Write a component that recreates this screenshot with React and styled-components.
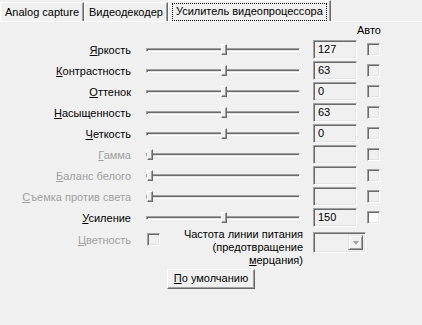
import React from "react";
import styled, { createGlobalStyle } from "styled-components";

const GlobalStyle = createGlobalStyle`
body {
margin: 0;
background: #f0f0f0;
font-family: "Liberation Sans", Arial, sans-serif;
font-size: 11px;
color: #000;
}
`;

const rows = [
  { key: "Я", rest: "ркость", value: "127", pos: 0.5 },
  { key: "К", rest: "онтрастность", value: "63", pos: 0.5 },
  { key: "О", rest: "ттенок", value: "0", pos: 0.5 },
  { key: "Н", rest: "асыщенность", value: "63", pos: 0.5 },
  { key: "Ч", rest: "еткость", value: "0", pos: 0.5 },
  { key: "Г", rest: "амма", value: "", pos: 0, disabled: true },
  { key: "Б", rest: "аланс белого", value: "", pos: 0, disabled: true },
  { key: "С", rest: "ъемка против света", value: "", pos: 0, disabled: true },
  { key: "У", rest: "силение", value: "150", pos: 0.5, enabledCheck: true },
];

export default function App() {
  return (
    <Page>
      <GlobalStyle />
      <TabBar>
        <Tab>Analog capture</Tab>
        <Tab>Видеодекодер</Tab>
        <Tab $active>
          <Focus>Усилитель видеопроцессора</Focus>
        </Tab>
      </TabBar>

      <Panel>
        <AutoHeader>Авто</AutoHeader>
        {rows.map((r) => (
          <Row key={r.rest}>
            <Label $disabled={r.disabled}>
              <u>{r.key}</u>
              {r.rest}
            </Label>
            <Track>
              <Groove />
              <Thumb $pos={r.pos} />
            </Track>
            <Edit>{r.value}</Edit>
            <Check $white={r.enabledCheck} />
          </Row>
        ))}

        <BottomRow>
          <ColorGroup>
            <Label $disabled>
              <u>Ц</u>ветность
            </Label>
            <Check $small />
          </ColorGroup>
          <FreqText>
            Частота линии питания
            <br />
            (предотвращение
            <br />
            <u>м</u>ерцания)
          </FreqText>
          <Combo>
            <ComboButton>
              <Arrow />
            </ComboButton>
          </Combo>
        </BottomRow>

        <DefaultButton>
          <u>П</u>о умолчанию
        </DefaultButton>
      </Panel>
    </Page>
  );
}

const Page = styled.div`
width: 422px;
height: 325px;
background: #f0f0f0;
overflow: hidden;
`;

const TabBar = styled.div`
display: flex;
align-items: flex-end;
height: 21px;
`;

const Tab = styled.div`
box-sizing: border-box;
height: ${(p) => (p.$active ? "21px" : "19px")};
padding: ${(p) => (p.$active ? "2px 3px 0 3px" : "3px 4px 0 4px")};
margin: ${(p) => (p.$active ? "0 -1px 0 0" : "0")};
border-left: 1px solid #fff;
border-top: 1px solid #fff;
border-right: 1px solid #696969;
box-shadow: inset -1px 0 #a0a0a0;
white-space: nowrap;
line-height: 13px;
position: relative;
z-index: ${(p) => (p.$active ? 1 : 0)};
background: #f0f0f0;
`;

const Focus = styled.span`
display: inline-block;
border: 1px dotted #000;
padding: 1px 3px 2px 3px;
line-height: 13px;
`;

const Panel = styled.div`
display: flex;
flex-direction: column;
border-top: 1px solid #fff;
`;

const AutoHeader = styled.div`
height: 17px;
padding: 2px 0 0 357px;
line-height: 13px;
box-sizing: border-box;
`;

const Row = styled.div`
display: flex;
align-items: center;
height: 21px;
`;

const Label = styled.div`
width: 131px;
text-align: right;
white-space: nowrap;
color: ${(p) => (p.$disabled ? "#a0a0a0" : "#000")};
`;

const Track = styled.div`
position: relative;
width: 154px;
height: 11px;
margin-left: 15px;
display: flex;
align-items: center;
`;

const Groove = styled.div`
width: 100%;
height: 4px;
box-sizing: border-box;
border-top: 1px solid #a0a0a0;
border-left: 1px solid #a0a0a0;
border-bottom: 1px solid #fff;
border-right: 1px solid #fff;
box-shadow: inset 1px 1px #696969, inset -1px -1px #e3e3e3;
`;

const Thumb = styled.div`
position: absolute;
top: 0;
left: ${(p) => 1 + p.$pos * 148}px;
width: 6px;
height: 11px;
box-sizing: border-box;
background: #f0f0f0;
border-top: 1px solid #fff;
border-left: 1px solid #fff;
border-right: 1px solid #696969;
border-bottom: 1px solid #696969;
box-shadow: inset -1px -1px #a0a0a0;
`;

const Edit = styled.div`
box-sizing: border-box;
width: 44px;
height: 19px;
margin-left: 13px;
padding: 2px 0 0 4px;
line-height: 13px;
border-top: 1px solid #a0a0a0;
border-left: 1px solid #a0a0a0;
border-bottom: 1px solid #fff;
border-right: 1px solid #fff;
box-shadow: inset 1px 1px #696969, inset -1px -1px #e3e3e3;
background: #f0f0f0;
`;

const Check = styled.div`
box-sizing: border-box;
width: 13px;
height: 13px;
margin-left: ${(p) => (p.$small ? "16px" : "10px")};
border-top: 1px solid #a0a0a0;
border-left: 1px solid #a0a0a0;
border-bottom: 1px solid #fff;
border-right: 1px solid #fff;
box-shadow: inset 1px 1px #696969, inset -1px -1px #e3e3e3;
background: ${(p) => (p.$white ? "#fff" : "#f0f0f0")};
`;

const BottomRow = styled.div`
display: flex;
align-items: flex-start;
height: 39px;
`;

const ColorGroup = styled.div`
display: flex;
align-items: center;
margin-top: 5px;
`;

const FreqText = styled.div`
width: 143px;
text-align: right;
line-height: 13px;
white-space: nowrap;
`;

const Combo = styled.div`
box-sizing: border-box;
width: 53px;
height: 21px;
margin: 4px 0 0 10px;
padding: 2px;
display: flex;
justify-content: flex-end;
border-top: 1px solid #a0a0a0;
border-left: 1px solid #a0a0a0;
border-bottom: 1px solid #fff;
border-right: 1px solid #fff;
box-shadow: inset 1px 1px #696969, inset -1px -1px #e3e3e3;
background: #f0f0f0;
`;

const ComboButton = styled.div`
box-sizing: border-box;
width: 15px;
height: 15px;
display: flex;
align-items: center;
justify-content: center;
border-top: 1px solid #e3e3e3;
border-left: 1px solid #e3e3e3;
border-bottom: 1px solid #696969;
border-right: 1px solid #696969;
box-shadow: inset 1px 1px #fff, inset -1px -1px #a0a0a0;
`;

const Arrow = styled.div`
width: 0;
height: 0;
border-left: 3.5px solid transparent;
border-right: 3.5px solid transparent;
border-top: 4px solid #a0a0a0;
filter: drop-shadow(1px 1px 0 #fff);
`;

const DefaultButton = styled.div`
box-sizing: border-box;
width: 88px;
height: 20px;
margin: 2px 0 0 167px;
text-align: center;
line-height: 16px;
border-top: 1px solid #fff;
border-left: 1px solid #fff;
border-bottom: 1px solid #696969;
border-right: 1px solid #696969;
box-shadow: inset -1px -1px #a0a0a0;
background: #f0f0f0;
`;
